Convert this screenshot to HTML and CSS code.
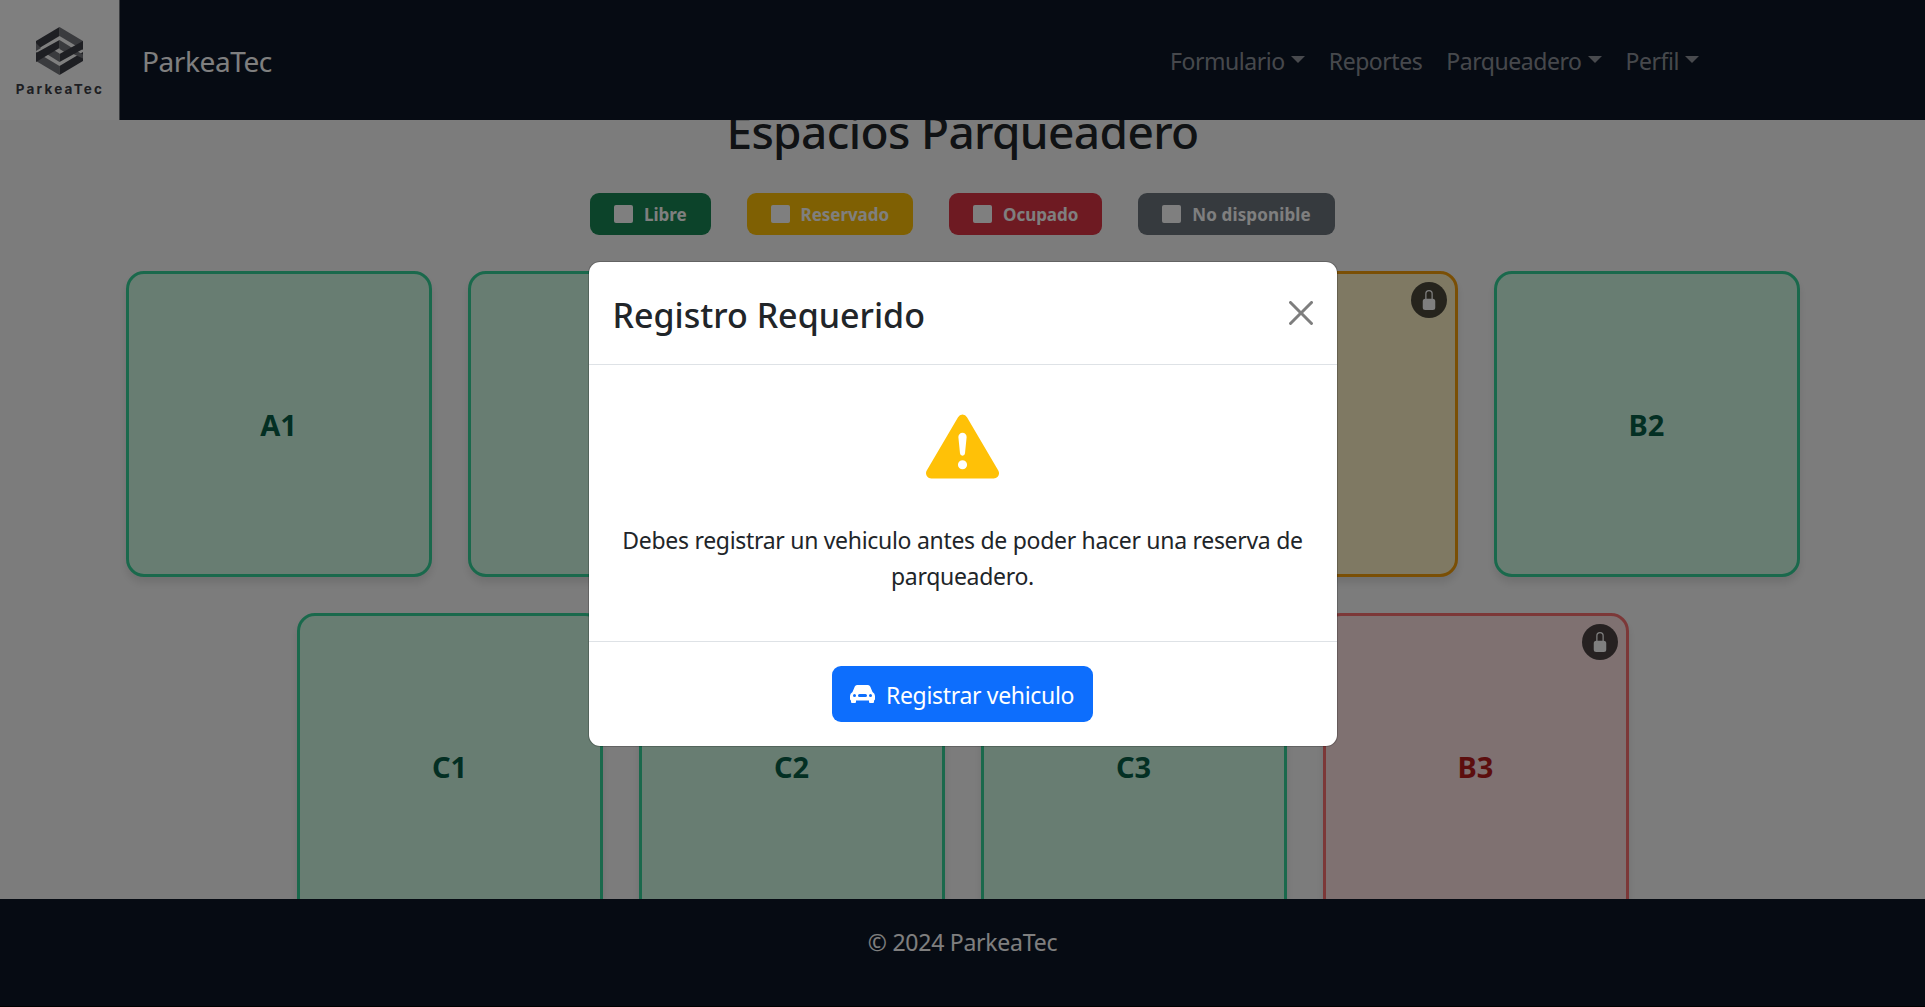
FILE: index.html
```html
<!DOCTYPE html>
<html lang="es">
<head>
<meta charset="utf-8">
<title>ParkeaTec</title>
<link rel="stylesheet" href="styles.css">
</head>
<body>
<svg class="sprite" aria-hidden="true">
  <symbol id="lock" viewBox="0 0 16 16"><path d="M8 1a2 2 0 0 1 2 2v4H6V3a2 2 0 0 1 2-2m3 6V3a3 3 0 0 0-6 0v4a2 2 0 0 0-2 2v5a2 2 0 0 0 2 2h6a2 2 0 0 0 2-2V9a2 2 0 0 0-2-2"/></symbol>
</svg>
<div class="page">
  <header class="navbar">
    <div class="logo">
      <svg class="logo-mark" viewBox="0 0 47 48">
        <path fill="#75767c" d="M23.500 0 47 14v9L23.500 9z"/>
        <path fill="#3d3e46" d="M23.500 0 0 14v9L23.500 9z"/>
        <path fill="#75767c" d="M0 25v9l23.500 14v-9z"/>
        <path fill="#3d3e46" d="M47 25v9L23.500 48v-9z"/>
        <path fill="#75767c" d="M23.500 13 38 22l-7 4.500-7.500-4.500z"/>
        <path fill="#75767c" d="M9 26l7-4 7.500 4.500V35z"/>
        <path fill="#75767c" d="M39 23l8 4.500v4L34 25.500zM0 16v8l5-3z"/>
        <path fill="#3d3e46" d="M0 26 23.500 13v8L0 35z"/>
        <path fill="#3d3e46" d="M47 14v8L23.500 35v-8z"/>
      </svg>
      <span class="logo-name">ParkeaTec</span>
    </div>
    <span class="brand">ParkeaTec</span>
    <nav class="links">
      <a class="link caret">Formulario</a>
      <a class="link">Reportes</a>
      <a class="link caret">Parqueadero</a>
      <a class="link caret">Perfil</a>
    </nav>
  </header>
  <main class="content">
    <h1 class="title">Espacios Parqueadero</h1>
    <div class="legend">
      <span class="badge free"><i></i><b>Libre</b></span>
      <span class="badge reserved"><i></i><b>Reservado</b></span>
      <span class="badge taken"><i></i><b>Ocupado</b></span>
      <span class="badge disabled"><i></i><b>No disponible</b></span>
    </div>
    <div class="spaces">
      <div class="space">A1</div>
      <div class="space">A2</div>
      <div class="space">A3</div>
      <div class="space space-reserved">B1<span class="lock"><svg><use href="#lock"/></svg></span></div>
      <div class="space">B2</div>
      <div class="space">C1</div>
      <div class="space">C2</div>
      <div class="space">C3</div>
      <div class="space space-taken">B3<span class="lock"><svg><use href="#lock"/></svg></span></div>
    </div>
  </main>
  <footer class="footer"><span>© 2024 ParkeaTec</span></footer>
</div>
<div class="backdrop">
  <section class="modal">
    <div class="modal-header">
      <h2 class="modal-title">Registro Requerido</h2>
      <svg class="close" viewBox="0 0 16 16"><path d="M.293.293a1 1 0 0 1 1.414 0L8 6.586 14.293.293a1 1 0 1 1 1.414 1.414L9.414 8l6.293 6.293a1 1 0 0 1-1.414 1.414L8 9.414l-6.293 6.293a1 1 0 0 1-1.414-1.414L6.586 8 .293 1.707a1 1 0 0 1 0-1.414"/></svg>
    </div>
    <div class="modal-body">
      <svg class="warning" viewBox="0 0 16 16"><path d="M8.982 1.566a1.13 1.13 0 0 0-1.960 0L.165 13.233c-.457.778.091 1.767.980 1.767h13.713c.889 0 1.438-.990.980-1.767zM8 5c.535 0 .954.462.900.995l-.350 3.507a.552.552 0 0 1-1.100 0L7.100 5.995A.905.905 0 0 1 8 5m.002 6a1 1 0 1 1 0 2 1 1 0 0 1 0-2"/></svg>
      <p class="message">Debes registrar un vehiculo antes de poder hacer una reserva de<br>parqueadero.</p>
    </div>
    <div class="modal-footer">
      <button class="button"><svg class="car" viewBox="0 0 25 18"><path fill-rule="evenodd" d="M7 0h11q1.500 0 2.200 1.500L22.500 7Q25 8.500 25 11v3q0 1-1 1.500V17q0 1-1 1h-3q-1 0-1-1v-1.500H6V17q0 1-1 1H2q-1 0-1-1v-1.500Q0 15 0 14v-3Q0 8.500 2.500 7l2.300-5.500Q5.500 0 7 0zM4.500 9a1.500 1.500 0 1 0 0 3 1.500 1.500 0 0 0 0-3m16 0a1.500 1.500 0 1 0 0 3 1.500 1.500 0 0 0 0-3M9.500 9a1.500 1.500 0 0 0 0 3h6a1.500 1.500 0 0 0 0-3z"/></svg><span class="button-label">Registrar vehiculo</span></button>
    </div>
  </section>
</div>
</body>
</html>
```
FILE: styles.css
```css
* { box-sizing: border-box; }
body {
  margin: 0;
  height: 1007px;
  overflow: hidden;
  background: #f9f9f9;
  color: #212529;
  font: 23px/36px "Noto Sans", "Open Sans", sans-serif;
}
.sprite { display: none; }
.page { height: 1007px; display: flex; flex-direction: column; }
.navbar {
  flex: none;
  height: 120px;
  display: flex;
  align-items: center;
  background: #0c1626;
}
.logo {
  width: 120px;
  height: 120px;
  display: flex;
  flex-direction: column;
  align-items: center;
  padding-top: 27px;
  background: #fff;
  border-right: 1px solid #75787f;
}
.logo-mark { width: 47px; height: 48px; }
.logo-name {
  margin: 5px -1px 0 0;
  font: 700 13.500px/18px Inter, sans-serif;
  letter-spacing: 2.200px;
  color: #3d3e46;
}
.brand { margin: 1px 0 0 22px; font-size: 28px; letter-spacing: -0.400px; color: #fff; }
.links {
  display: flex;
  gap: 24px;
  margin: 2px 226px 0 auto;
  color: rgba(255, 255, 255, .55);
}
.link { display: flex; align-items: center; letter-spacing: -0.450px; }
.caret::after {
  content: "";
  margin: -3px 0 0 6px;
  border: 7px solid transparent;
  border-top-color: currentColor;
  border-bottom: 0;
}
.content { flex: 1; min-height: 0; overflow: hidden; }
.title {
  margin: -17px 0 0;
  height: 54px;
  font-size: 46px;
  line-height: 57px;
  font-weight: 500;
  letter-spacing: -0.630px;
  text-align: center;
}
.legend { display: flex; justify-content: center; gap: 36px; margin: 36px 0; }
.badge {
  display: flex;
  align-items: center;
  height: 42px;
  padding: 0 24px;
  border-radius: 9px;
  color: #fff;
  font-size: 17px;
  letter-spacing: -0.050px;
}
.badge b { margin-top: 2px; }
.badge i { width: 19px; height: 18px; margin-right: 11px; border-radius: 2px; background: #fff; }
.free { background: #198754; }
.reserved { background: #ffc107; }
.taken { background: #dc3545; }
.disabled { background: #6c757d; letter-spacing: .150px; }
.spaces { display: flex; flex-wrap: wrap; justify-content: center; gap: 36px; padding: 0 108px; margin-left: 1px; }
.space {
  position: relative;
  flex: none;
  width: 306px;
  height: 306px;
  display: flex;
  align-items: center;
  justify-content: center;
  padding: 2px 1px 0 0;
  border: 3px solid #34d399;
  border-radius: 18px;
  background: #d1fae5;
  color: #065f46;
  box-shadow: 0 6px 9px rgba(0, 0, 0, .1);
  font-size: 29px;
  font-weight: 700;
}
.space-reserved { border-color: #f59e0b; background: #fef3c7; color: #92400e; }
.space-taken { border-color: #f87171; background: #fee2e2; color: #b91c1c; }
.lock {
  position: absolute;
  top: 8px;
  right: 8px;
  width: 36px;
  height: 36px;
  display: flex;
  align-items: center;
  justify-content: center;
  border-radius: 50%;
  background: rgba(0, 0, 0, .7);
  fill: #fff;
}
.lock svg { width: 20px; height: 20px; }
.footer {
  flex: none;
  height: 108px;
  padding-top: 25px;
  background: #0c1626;
  border-bottom: 1px solid #000;
  color: #fff;
  letter-spacing: -0.250px;
  text-align: center;
}
.backdrop {
  position: absolute;
  inset: 0;
  display: flex;
  justify-content: center;
  align-items: flex-start;
  padding-top: 261px;
  background: rgba(0, 0, 0, .5);
}
.modal {
  width: 750px;
  height: 486px;
  border: 1px solid rgba(0, 0, 0, .2);
  border-radius: 12px;
  background: #fff;
  background-clip: padding-box;
}
.modal-header {
  height: 103px;
  display: flex;
  align-items: center;
  justify-content: space-between;
  padding: 0 24px;
  border-bottom: 1px solid #dee2e6;
}
.modal-title { margin: 4px 0 0; font-size: 34px; line-height: 54px; font-weight: 500; }
.close { width: 24px; height: 24px; opacity: .5; }
.modal-body {
  height: 277px;
  padding-top: 45px;
  display: flex;
  flex-direction: column;
  align-items: center;
  border-bottom: 1px solid #dee2e6;
}
.warning { width: 73px; height: 73px; fill: #ffc107; }
.message { margin: 39px 0 0; text-align: center; white-space: nowrap; letter-spacing: -0.300px; }
.modal-footer { display: flex; justify-content: center; padding-top: 24px; }
.button {
  width: 261px;
  height: 56px;
  display: flex;
  align-items: center;
  padding: 0 18px;
  border: 0;
  border-radius: 9px;
  background: #0d6efd;
  color: #fff;
  font: inherit;
  letter-spacing: -0.330px;
  white-space: nowrap;
}
.button-label { margin-top: 2px; }
.car { flex: none; width: 25px; height: 18px; margin-right: 11px; fill: currentColor; }
```
